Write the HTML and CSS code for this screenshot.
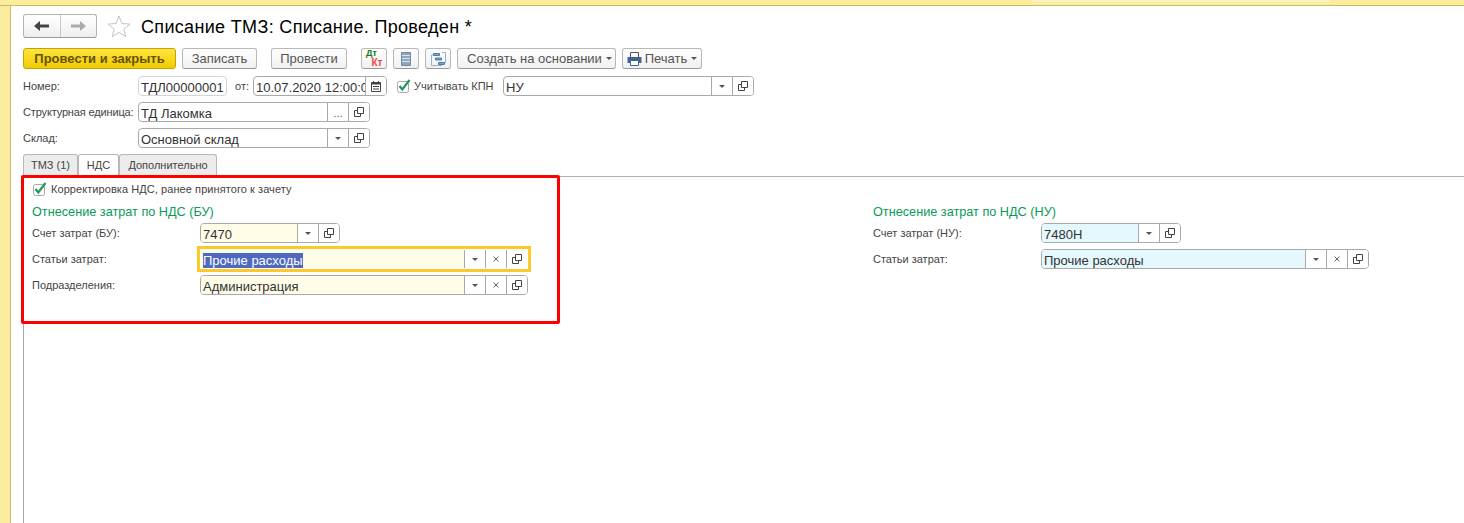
FILE: index.html
```html
<!DOCTYPE html>
<html lang="ru">
<head>
<meta charset="utf-8">
<title>Списание ТМЗ</title>
<link rel="stylesheet" href="styles.css">
</head>
<body>
<svg class="defs" width="0" height="0" aria-hidden="true">
  <symbol id="i-open" viewBox="0 0 10 10"><path d="M3.500 .5h6v6h-6z M3.500 3.500h-3v6h6v-3" fill="none" stroke="#444" stroke-width="1"/></symbol>
  <symbol id="i-down" viewBox="0 0 6 3"><path d="M0 0h6L3 3z" fill="#555"/></symbol>
  <symbol id="i-x" viewBox="0 0 6 6"><path d="M.5 .5l5 5M5.500 .5l-5 5" stroke="#666" stroke-width="1" fill="none"/></symbol>
  <symbol id="i-check" viewBox="0 0 14 14"><rect x=".5" y="2.500" width="11" height="11" rx="2" fill="#fff" stroke="#a9a9a9"/><path d="M2.500 7l2.800 3.500L12.500 1" fill="none" stroke="#1f9a5a" stroke-width="2.200"/></symbol>
</svg>
<div class="topbar"><div class="topbar-tab"></div></div>
<div class="shell">
  <aside class="side"></aside>
  <main class="main">
    <header class="head">
      <div class="nav">
        <button class="nav-btn"><svg width="15" height="10" viewBox="0 0 15 10"><path d="M0 5l6-5v3.500h9v3H6V10z" fill="#444"/></svg></button>
        <button class="nav-btn"><svg width="15" height="10" viewBox="0 0 15 10"><path d="M15 5L9 0v3.500H0v3h9V10z" fill="#aaa"/></svg></button>
      </div>
      <svg class="star" width="24" height="22" viewBox="0 0 24 22"><path d="M12 1l3 7.500 8 .6-6.200 5 2 7.400L12 17.400 5.200 21.500l2-7.400L1 9.100l8-.6z" fill="#fff" stroke="#c4c4c4"/></svg>
      <h1 class="title">Списание ТМЗ: Списание. Проведен *</h1>
    </header>
    <div class="toolbar">
      <button class="btn btn-primary w153">Провести и закрыть</button>
      <button class="btn w75">Записать</button>
      <button class="btn w76 ml8">Провести</button>
      <button class="btn w26 ml8 dtkt"><span class="dt">Дт</span><span class="kt">Кт</span></button>
      <button class="btn w26"><svg width="10" height="14" viewBox="0 0 10 14"><path d="M.5.500h9v13h-9z" fill="#8fa6bd" stroke="#6f8aa5"/><path d="M1 3.500h8M1 6.500h8M1 9.500h8" stroke="#dfe7ef"/></svg></button>
      <button class="btn w26"><svg width="15" height="14" viewBox="0 0 15 14" fill="none"><path d="M3 3H.5v10.500H11M11 .5h3.500V11" stroke="#8fb2d0"/><path d="M2.500 1.500h6v2h-6zM4.500 6h6v2h-6zM7.500 10.500h6v2h-6z" fill="#7ea3c4" stroke="#4f7da6"/></svg></button>
      <button class="btn w159 start">Создать на основании<svg class="caret" width="6" height="3"><use href="#i-down"/></svg></button>
      <button class="btn w80"><svg width="15" height="14" viewBox="0 0 15 14"><path d="M3.500 .5h8v5h-8z" fill="#fff" stroke="#555"/><path d="M.5 5h14v6H.5z" fill="#3f6590"/><path d="M3.500 8.500h8v5h-8z" fill="#fff" stroke="#3f6590"/></svg>Печать<svg class="caret" width="6" height="3"><use href="#i-down"/></svg></button>
    </div>
    <div class="form-row">
      <span class="label w115">Номер:</span>
      <span class="field w89 plain"><span class="value">ТДЛ00000001</span></span>
      <span class="label from">от:</span>
      <span class="field w134 plain"><span class="value">10.07.2020 12:00:0</span><span class="fbtn"><svg width="10" height="11" viewBox="0 0 10 11"><path d="M.5 1.500h9v9h-9z" fill="#fff" stroke="#444"/><path d="M1 1.500h8v2H1zM2 0h1v2H2zM7 0h1v2H7zM2 5h6v1H2zM2 7.500h6v1H2z" fill="#444"/></svg></span></span>
      <svg class="check kpn-check" width="14" height="14"><use href="#i-check"/></svg>
      <span class="label kpn">Учитывать КПН</span>
      <span class="field w251"><span class="value">НУ</span><span class="fbtn"><svg width="6" height="3"><use href="#i-down"/></svg></span><span class="fbtn"><svg width="10" height="10"><use href="#i-open"/></svg></span></span>
    </div>
    <div class="form-row">
      <span class="label w115 tight">Структурная единица:</span>
      <span class="field w232"><span class="value">ТД Лакомка</span><span class="fbtn dots">...</span><span class="fbtn"><svg width="10" height="10"><use href="#i-open"/></svg></span></span>
    </div>
    <div class="form-row">
      <span class="label w115">Склад:</span>
      <span class="field w232"><span class="value">Основной склад</span><span class="fbtn"><svg width="6" height="3"><use href="#i-down"/></svg></span><span class="fbtn"><svg width="10" height="10"><use href="#i-open"/></svg></span></span>
    </div>
    <nav class="tabs">
      <span class="tab w55">ТМЗ (1)</span>
      <span class="tab tab-active w41">НДС</span>
      <span class="tab w98">Дополнительно</span>
    </nav>
    <section class="panel">
      <div class="corr"><svg class="check" width="14" height="14"><use href="#i-check"/></svg><span class="label wide">Корректировка НДС, ранее принятого к зачету</span></div>
      <div class="cols">
        <div class="col">
          <h2 class="group">Отнесение затрат по НДС (БУ)</h2>
          <div class="frow"><span class="label">Счет затрат (БУ):</span>
            <span class="field w140"><span class="value yellow">7470</span><span class="fbtn"><svg width="6" height="3"><use href="#i-down"/></svg></span><span class="fbtn"><svg width="10" height="10"><use href="#i-open"/></svg></span></span></div>
          <div class="frow"><span class="label">Статьи затрат:</span>
            <span class="field w328 focus"><span class="value yellow"><span class="sel">Прочие расходы</span></span><span class="fbtn"><svg width="6" height="3"><use href="#i-down"/></svg></span><span class="fbtn"><svg width="6" height="6"><use href="#i-x"/></svg></span><span class="fbtn"><svg width="10" height="10"><use href="#i-open"/></svg></span></span></div>
          <div class="frow"><span class="label">Подразделения:</span>
            <span class="field w328"><span class="value yellow">Администрация</span><span class="fbtn"><svg width="6" height="3"><use href="#i-down"/></svg></span><span class="fbtn"><svg width="6" height="6"><use href="#i-x"/></svg></span><span class="fbtn"><svg width="10" height="10"><use href="#i-open"/></svg></span></span></div>
        </div>
        <div class="col">
          <h2 class="group">Отнесение затрат по НДС (НУ)</h2>
          <div class="frow"><span class="label">Счет затрат (НУ):</span>
            <span class="field w140"><span class="value blue">7480Н</span><span class="fbtn"><svg width="6" height="3"><use href="#i-down"/></svg></span><span class="fbtn"><svg width="10" height="10"><use href="#i-open"/></svg></span></span></div>
          <div class="frow"><span class="label">Статьи затрат:</span>
            <span class="field w328"><span class="value blue">Прочие расходы</span><span class="fbtn"><svg width="6" height="3"><use href="#i-down"/></svg></span><span class="fbtn"><svg width="6" height="6"><use href="#i-x"/></svg></span><span class="fbtn"><svg width="10" height="10"><use href="#i-open"/></svg></span></span></div>
        </div>
      </div>
    </section>
    <div class="annotation"></div>
  </main>
</div>
</body>
</html>
```
FILE: styles.css
```css
* { box-sizing: border-box; }
html, body { margin: 0; height: 100%; }
body {
  display: flex; flex-direction: column; height: 523px; overflow: hidden;
  background: #fff; color: #333;
  font-family: "Liberation Sans", Arial, sans-serif; font-size: 13px;
}
.defs { position: absolute; }
.topbar { height: 6px; flex: none; background: #fcec9e; border-bottom: 1px solid #cdbc66; position: relative; display: flex; justify-content: flex-end; padding-right: 134px; }
.topbar-tab { width: 298px; height: 2px; background: #fdf3c0; }
.shell { flex: 1; display: flex; min-height: 0; }
.side { width: 11px; flex: none; background: #fcec9e; border-right: 1px solid #cdbc66; }
.main { flex: 1; min-width: 0; padding: 8px 0 0 12px; display: flex; flex-direction: column; position: relative; }

.head { display: flex; align-items: center; height: 24px; margin-bottom: 10px; }
.nav { display: flex; width: 74px; height: 24px; border: 1px solid #b4b4b4; border-bottom-color: #999; border-radius: 3px; background: linear-gradient(#fff, #efefef); }
.nav-btn { flex: 1; padding: 0; background: none; border: 0; display: flex; align-items: center; justify-content: center; }
.nav-btn + .nav-btn { border-left: 1px solid #c8c8c8; }
.star { margin-left: 10px; }
.title { margin: 2px 0 0 10px; font-size: 18px; letter-spacing: .33px; font-weight: 400; color: #000; white-space: nowrap; }

.toolbar { display: flex; gap: 6px; height: 21px; margin-bottom: 7px; }
.btn { height: 21px; padding: 0; display: flex; align-items: center; justify-content: center; gap: 3px; font: 13px "Liberation Sans", Arial, sans-serif; color: #555; border: 1px solid #b8b8b8; border-bottom-color: #999; border-radius: 3px; background: linear-gradient(#fff, #f0f0f0); }
.btn-primary { font-weight: 700; color: #645200; border-color: #c4a300; background: linear-gradient(#fde53f, #f2cb00); }
.start { justify-content: flex-start; padding-left: 9px; }
.caret { margin-left: 1px; }
.ml8 { margin-left: 8px; }
.w153 { width: 153px; } .w75 { width: 75px; } .w76 { width: 76px; } .w26 { width: 26px; }
.w159 { width: 159px; } .w80 { width: 80px; }
.dtkt { flex-direction: column; gap: 0; align-items: center; font-weight: 700; }
.dt { color: #1a7a1a; margin-right: 5px; font-size: 9px; line-height: 9px; }
.kt { color: #f04848; margin-left: 6px; font-size: 10px; line-height: 10px; }

.form-row { display: flex; align-items: center; height: 20px; margin-bottom: 6px; }
.label { font-size: 11px; color: #444; white-space: nowrap; }
.tight { letter-spacing: -.15px; }
.wide { letter-spacing: .07px; }
.w115 { width: 115px; flex: none; }
.from { margin: 0 6px 0 8px; width: 12px; }
.kpn-check { margin-left: 10px; }
.kpn { margin: 0 8px 0 3px; width: 81px; }

.field { display: flex; height: 20px; flex: none; border: 1px solid #a9a9a9; border-radius: 4px; background: #fff; overflow: hidden; }
.plain { border-color: #d4d4d4; }
.w134.plain { border-color: #a9a9a9; }
.value { flex: 1; min-width: 0; padding: 2px 0 0 2px; font-size: 13px; line-height: 18px; color: #333; white-space: nowrap; overflow: hidden; }
.fbtn { flex: none; width: 21px; border-left: 1px solid #a9a9a9; display: flex; align-items: center; justify-content: center; background: #fff; }
.dots { align-items: flex-end; font-size: 11px; color: #555; line-height: 15px; }
.yellow { background: #fffde8; }
.blue { background: #e4f8fd; }
.sel { background: #4f69c0; color: #fff; }
.w89 { width: 89px; } .w134 { width: 134px; } .w251 { width: 251px; } .w232 { width: 232px; }
.w140 { width: 140px; } .w328 { width: 328px; }
.focus { border-color: #fff; border-radius: 0; overflow: visible; outline: 3px solid #fdc92a; }

.tabs { display: flex; height: 23px; border-bottom: 1px solid #b0b0b0; }
.tab { height: 22px; display: flex; align-items: center; justify-content: center; padding-bottom: 2px; font-size: 11px; color: #444; background: #ececec; border: 1px solid #b8b8b8; border-bottom: 0; border-radius: 3px 3px 0 0; }
.tab-active { background: #fff; height: 23px; position: relative; z-index: 1; }
.w55 { width: 55px; } .w41 { width: 41px; } .w98 { width: 98px; }

.panel { flex: 1; border-left: 1px solid #aaa; padding: 5px 0 0 8px; min-height: 0; }
.corr { display: flex; align-items: center; gap: 4px; height: 14px; margin-left: 1px; }
.cols { display: grid; grid-template-columns: 841px 1fr; }
.col { min-width: 0; }
.group { margin: 9px 0 4px; height: 14px; font-size: 12.700px; line-height: 14px; font-weight: 400; color: #0a9a5a; }
.frow { display: flex; align-items: center; height: 20px; margin-bottom: 6px; }
.frow .label { width: 168px; flex: none; }

.annotation { position: absolute; left: 10px; top: 169px; width: 539px; height: 149px; border: 3px solid #f00; border-radius: 2px; z-index: 5; pointer-events: none; }
```
